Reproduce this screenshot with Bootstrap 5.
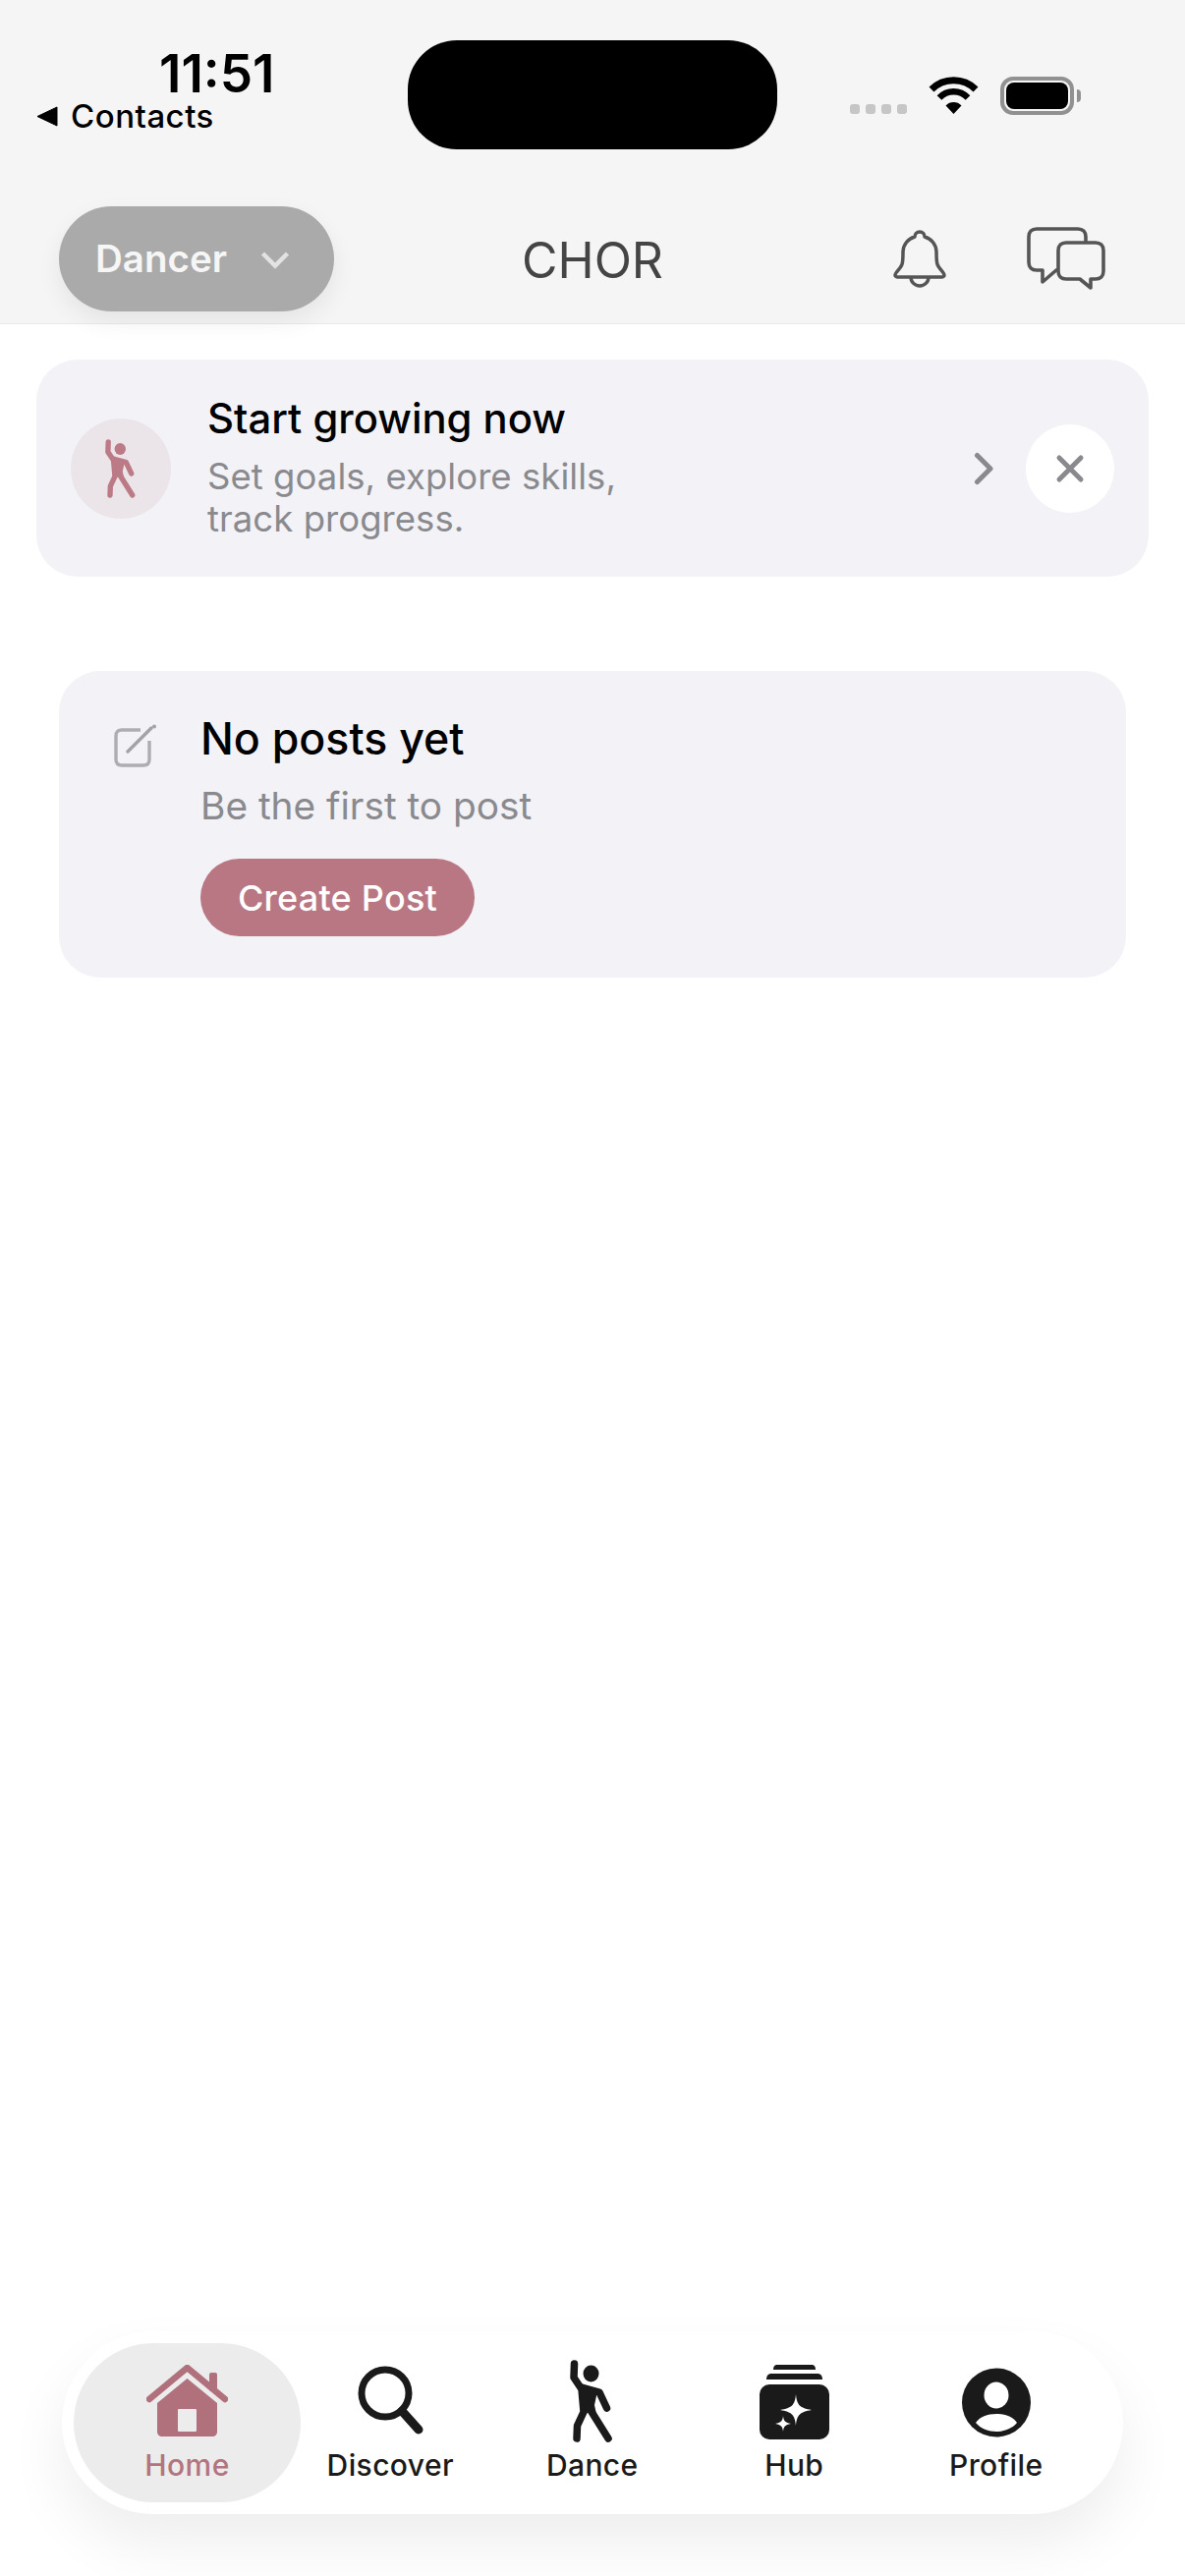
<!DOCTYPE html>
<html lang="en">
<head>
  <meta charset="UTF-8" />
  <meta name="viewport" content="width=device-width, initial-scale=1.0"/>
  <title>CHOR</title>
  <link href="https://cdn.jsdelivr.net/npm/bootstrap@5.3.0/dist/css/bootstrap.min.css" rel="stylesheet"/>
  <style>
    html, body { height: 100%; }
    body { font-family: Inter, "Liberation Sans", sans-serif; background: #fff; color: #000; overflow: hidden; }
    svg { display: block; flex-shrink: 0; }

    .top-area { background: #f5f5f5; border-bottom: 1px solid #e9e9e9; height: 330px; }
    .status-row { height: 197px; padding-left: 37px; }
    .status-left { width: 378px; padding-top: 45px; }
    .clock { font-size: 53px; font-weight: 600; line-height: 60px; margin-left: 125px; }
    .back-link { font-size: 33px; font-weight: 500; line-height: 30px; margin-top: -2px; gap: 13px; letter-spacing: .5px; }
    .island { width: 376px; height: 111px; margin-top: 41px; background: #000; border-radius: 50px; }
    .status-right { padding-top: 78px; margin-left: 74px; }
    .sig-dot { width: 10px; height: 10px; background: #c6c6c6; border-radius: 3px; }
    .sig-dots { gap: 6px; margin-top: 28px; margin-right: 22px; }
    .batt { width: 75px; height: 39px; border: 4px solid #919191; border-radius: 13px; padding: 2px; margin-left: 22px; }
    .batt-fill { background: #000; border-radius: 8px; height: 100%; }
    .batt-nub { width: 4px; height: 13px; background: #919191; border-radius: 0 4px 4px 0; margin-left: 3px; margin-top: 13px; }

    .head-row { height: 132px; padding: 0 81px 0 60px; position: relative; }
    .role-btn { width: 280px; height: 107px; background: #aaa; border: 0; border-radius: 54px; color: #f6f6f6; font-size: 38.5px; font-weight: 560; padding: 2px 0 0 37px; gap: 34px; box-shadow: 0 10px 24px rgba(0,0,0,.07); }
    .role-btn:hover, .role-btn:active { background: #aaa !important; color: #f6f6f6 !important; }
    .app-name { position: absolute; left: 0; right: 0; top: 38px; text-align: center; font-size: 50px; line-height: 60px; color: #444; pointer-events: none; }
    .head-icons { gap: 82px; }

    .promo { margin: 36px 37px 0; height: 221px; background: #f2f2f7; border: 0; border-radius: 42px; padding: 0 35px; }
    .promo-icon { width: 102px; height: 102px; background: #ebe5ea; border-radius: 50%; margin-right: 37px; }
    .promo-text { padding-bottom: 3px; }
    .promo-title { font-size: 41.8px; font-weight: 550; line-height: 50px; margin-bottom: 13px; }
    .promo-sub { font-size: 36.5px; line-height: 43px; color: #8a8a8e; width: 440px; letter-spacing: .05px; }
    .promo-close { width: 90px; height: 90px; background: #fff; border-radius: 50%; border: 0; padding: 0; margin-left: 32px; }

    .empty-box { margin: 96px 60px 0; height: 312px; background: #f2f2f7; border: 0; border-radius: 42px; padding: 41px 0 0 56px; }
    .empty-icon { margin-right: 44px; margin-top: 13px; }
    .empty-title { font-size: 44.7px; font-weight: 550; line-height: 56px; margin-bottom: 17px; }
    .empty-sub { font-size: 38.8px; line-height: 46px; color: #8a8a8e; margin-bottom: 31px; }
    .post-btn { width: 279px; height: 79px; background: #b87783; color: #fff; border: 0; border-radius: 40px; font-size: 36px; font-weight: 550; padding: 0; letter-spacing: .25px; }
    .post-btn:hover, .post-btn:active { background: #b87783 !important; color: #fff !important; }

    .tab-wrap { padding: 0 63px 63px 63px; }
    .tab-bar { height: 186px; background: #fff; border-radius: 93px; padding: 12px; box-shadow: 0 30px 60px rgba(0,0,0,.07); flex-wrap: nowrap; }
    .tab-item { width: 205.5px; height: 162px; border-radius: 81px; color: #1a1a1a; font-size: 30px; font-weight: 460; line-height: 36px; padding: 0; letter-spacing: .4px; }
    .tab-item.first-tab { width: 231px; margin-right: -11.5px; }
    .tab-item.is-current { background: #ececec; color: #b3747f; }
    .tab-glyph { height: 96px; margin-bottom: 10px; }
    .up-2 { margin-bottom: 2px; }
    .dn-2 { margin-bottom: -2px; }
    .dn-5 { margin-bottom: -5px; }
  </style>
</head>
<body class="d-flex flex-column">
  <svg width="0" height="0" class="position-absolute">
    <symbol id="dancer" viewBox="0 0 45 84">
      <ellipse cx="21.5" cy="14" rx="8" ry="8.4" fill="currentColor"/>
      <path d="M4.5 4 L4 18 L12 30 L14 53 L7.5 67 L7 80" fill="none" stroke="currentColor" stroke-width="7.5" stroke-linecap="round" stroke-linejoin="round"/>
      <path d="M12 28 L30 33 L37.5 49" fill="none" stroke="currentColor" stroke-width="7.5" stroke-linecap="round" stroke-linejoin="round"/>
      <path d="M19 48 L39 80" fill="none" stroke="currentColor" stroke-width="7.5" stroke-linecap="round"/>
      <path d="M10 28 L28 32 L25 46 L28 60 L19 53 L12 58 Z" fill="currentColor"/>
    </symbol>
  </svg>

  <header class="top-area flex-shrink-0">
    <div class="status-row d-flex">
      <div class="status-left">
        <div class="clock">11:51</div>
        <div class="back-link d-flex align-items-center">
          <svg width="22" height="21" viewBox="0 0 22 21"><path d="M21 1 V20 L1 10.5 Z" fill="#000" stroke="#000" stroke-linejoin="round"/></svg>
          <span>Contacts</span>
        </div>
      </div>
      <div class="island"></div>
      <div class="status-right d-flex align-items-start">
        <div class="sig-dots d-flex">
          <div class="sig-dot"></div><div class="sig-dot"></div><div class="sig-dot"></div><div class="sig-dot"></div>
        </div>
        <svg width="51" height="38" viewBox="0 0 51 38">
          <path d="M3 13 A32 32 0 0 1 48 13" fill="none" stroke="#000" stroke-width="7"/>
          <path d="M11 21.5 A20 20 0 0 1 40 21.5" fill="none" stroke="#000" stroke-width="6.5"/>
          <path d="M25.5 38 L17.5 29.5 A11 11 0 0 1 33.5 29.5 Z" fill="#000"/>
        </svg>
        <div class="batt"><div class="batt-fill"></div></div>
        <div class="batt-nub"></div>
      </div>
    </div>
    <div class="head-row d-flex align-items-center justify-content-between">
      <button class="btn role-btn d-flex align-items-center" type="button">
        <span>Dancer</span>
        <svg width="30" height="19" viewBox="0 0 30 19"><path d="M2.5 3 L15 15.5 L27.5 3" fill="none" stroke="#e2e2e2" stroke-width="4.5"/></svg>
      </button>
      <div class="app-name">CHOR</div>
      <div class="head-icons d-flex align-items-center">
        <svg width="54" height="59" viewBox="0 0 54 59">
          <path d="M27 2 C30 2 32 4 32 7 C39 9 44 15 44 23 C44 28 44 32 45 35 C46 39 52 43 52 46 C52 47 51 48 50 48 H4 C3 48 2 47 2 46 C2 43 8 39 9 35 C10 32 10 28 10 23 C10 15 15 9 22 7 C22 4 24 2 27 2 Z" fill="none" stroke="#555" stroke-width="3.5" stroke-linejoin="round"/>
          <path d="M18 48 C18 53 22 57 27 57 C32 57 36 53 36 48" fill="none" stroke="#555" stroke-width="3.5"/>
        </svg>
        <svg width="80" height="64" viewBox="0 0 80 64">
          <path d="M60 14 V10 C60 5 57 2 52 2 H10 C5 2 2 5 2 10 V36 C2 41 5 44 10 44 H16 V56 L30 44" fill="none" stroke="#555" stroke-width="3.6" stroke-linecap="round" stroke-linejoin="round"/>
          <path d="M40 16 H70 C75 16 78 19 78 24 V45 C78 50 75 53 70 53 H65 V62 L54 53 H40 C35 53 32 50 32 45 V24 C32 19 35 16 40 16 Z" fill="#f5f5f5" stroke="#555" stroke-width="3.6" stroke-linejoin="round"/>
        </svg>
      </div>
    </div>
  </header>

  <main class="flex-grow-1">
    <div class="card promo flex-row align-items-center">
      <div class="promo-icon d-flex align-items-center justify-content-center">
        <svg width="32" height="60" style="color:#bb7a85"><use href="#dancer"/></svg>
      </div>
      <div class="promo-text flex-grow-1">
        <div class="promo-title">Start growing now</div>
        <div class="promo-sub">Set goals, explore skills, track progress.</div>
      </div>
      <svg width="21" height="34" viewBox="0 0 21 34"><path d="M3.5 3.5 L17 17 L3.5 30.5" fill="none" stroke="#8a8a8e" stroke-width="5" stroke-linecap="round" stroke-linejoin="round"/></svg>
      <button class="btn promo-close d-flex align-items-center justify-content-center" type="button" aria-label="Dismiss">
        <svg width="30" height="30" viewBox="0 0 30 30"><path d="M4 4 L26 26 M26 4 L4 26" stroke="#8a8a8e" stroke-width="5" stroke-linecap="round"/></svg>
      </button>
    </div>

    <div class="card empty-box flex-row align-items-start">
      <svg class="empty-icon" width="44" height="44" viewBox="0 0 44 44">
        <path d="M27 6 H8 C4 6 2 8 2 12 V36 C2 40 4 42 8 42 H30 C34 42 36 40 36 36 V17" fill="none" stroke="#adadb2" stroke-width="3.4"/>
        <path d="M14 28 L38 4" stroke="#a2a2a7" stroke-width="3.4" stroke-linecap="round"/>
        <circle cx="41" cy="2.5" r="2" fill="#a2a2a7"/>
      </svg>
      <div>
        <div class="empty-title">No posts yet</div>
        <div class="empty-sub">Be the first to post</div>
        <button class="btn post-btn" type="button">Create Post</button>
      </div>
    </div>
  </main>

  <footer class="tab-wrap flex-shrink-0">
    <nav class="nav tab-bar align-items-center">
      <a class="tab-item first-tab is-current d-flex flex-column align-items-center text-decoration-none">
        <div class="tab-glyph d-flex align-items-end">
          <svg width="83" height="74" viewBox="0 0 83 74">
            <path d="M3 35 L41.5 3 L80 35" fill="none" stroke="#b0707c" stroke-width="6.5" stroke-linecap="round" stroke-linejoin="round"/>
            <rect x="64" y="8" width="8" height="19" rx="2" fill="#b0707c"/>
            <path d="M41.5 14 L72 39 V68 C72 71 70 73 67 73 H16 C13 73 11 71 11 68 V39 Z" fill="#b0707c"/>
            <rect x="32" y="45" width="19" height="23" rx="1" fill="#ececec"/>
          </svg>
        </div>
        <span>Home</span>
      </a>
      <a class="tab-item d-flex flex-column align-items-center text-decoration-none">
        <div class="tab-glyph d-flex align-items-end">
          <svg class="up-2" width="68" height="72" viewBox="0 0 68 72">
            <circle cx="29" cy="29" r="24" fill="none" stroke="#1a1a1a" stroke-width="7"/>
            <path d="M46 47 L63 66" stroke="#1a1a1a" stroke-width="9" stroke-linecap="round"/>
          </svg>
        </div>
        <span>Discover</span>
      </a>
      <a class="tab-item d-flex flex-column align-items-center text-decoration-none">
        <div class="tab-glyph d-flex align-items-end">
          <svg class="dn-5" width="45" height="84" style="color:#1a1a1a"><use href="#dancer"/></svg>
        </div>
        <span>Dance</span>
      </a>
      <a class="tab-item d-flex flex-column align-items-center text-decoration-none">
        <div class="tab-glyph d-flex align-items-end">
          <svg class="dn-2" width="71" height="77" viewBox="0 0 71 77">
            <path d="M14 6 C14 2 16 1 18 1 H53 C55 1 57 2 57 6 Z" fill="#1a1a1a"/>
            <path d="M7 16 C7 12 9 10 12 10 H59 C62 10 64 12 64 16 Z" fill="#1a1a1a"/>
            <rect x="0" y="21" width="71" height="56" rx="10" fill="#1a1a1a"/>
            <path d="M37 31 C38 42 41 45 53 47 C41 49 38 52 37 63 C36 52 33 49 21 47 C33 45 36 42 37 31 Z" fill="#fff"/>
            <path d="M24 53 C24.5 58 26 60 32 61 C26 62 24.5 64 24 69 C23.5 64 22 62 16 61 C22 60 23.5 58 24 53 Z" fill="#fff"/>
          </svg>
        </div>
        <span>Hub</span>
      </a>
      <a class="tab-item d-flex flex-column align-items-center text-decoration-none">
        <div class="tab-glyph d-flex align-items-end">
          <svg width="70" height="71" viewBox="0 0 70 71">
            <circle cx="35" cy="35.5" r="35" fill="#1a1a1a"/>
            <ellipse cx="35" cy="28" rx="12.5" ry="13.5" fill="#fff"/>
            <path d="M14 56 C18 50 26 47 35 47 C44 47 52 50 56 56 C51 62 43 65 35 65 C27 65 19 62 14 56 Z" fill="#fff"/>
          </svg>
        </div>
        <span>Profile</span>
      </a>
    </nav>
  </footer>

  <script src="https://cdn.jsdelivr.net/npm/bootstrap@5.3.0/dist/js/bootstrap.bundle.min.js"></script>
</body>
</html>
